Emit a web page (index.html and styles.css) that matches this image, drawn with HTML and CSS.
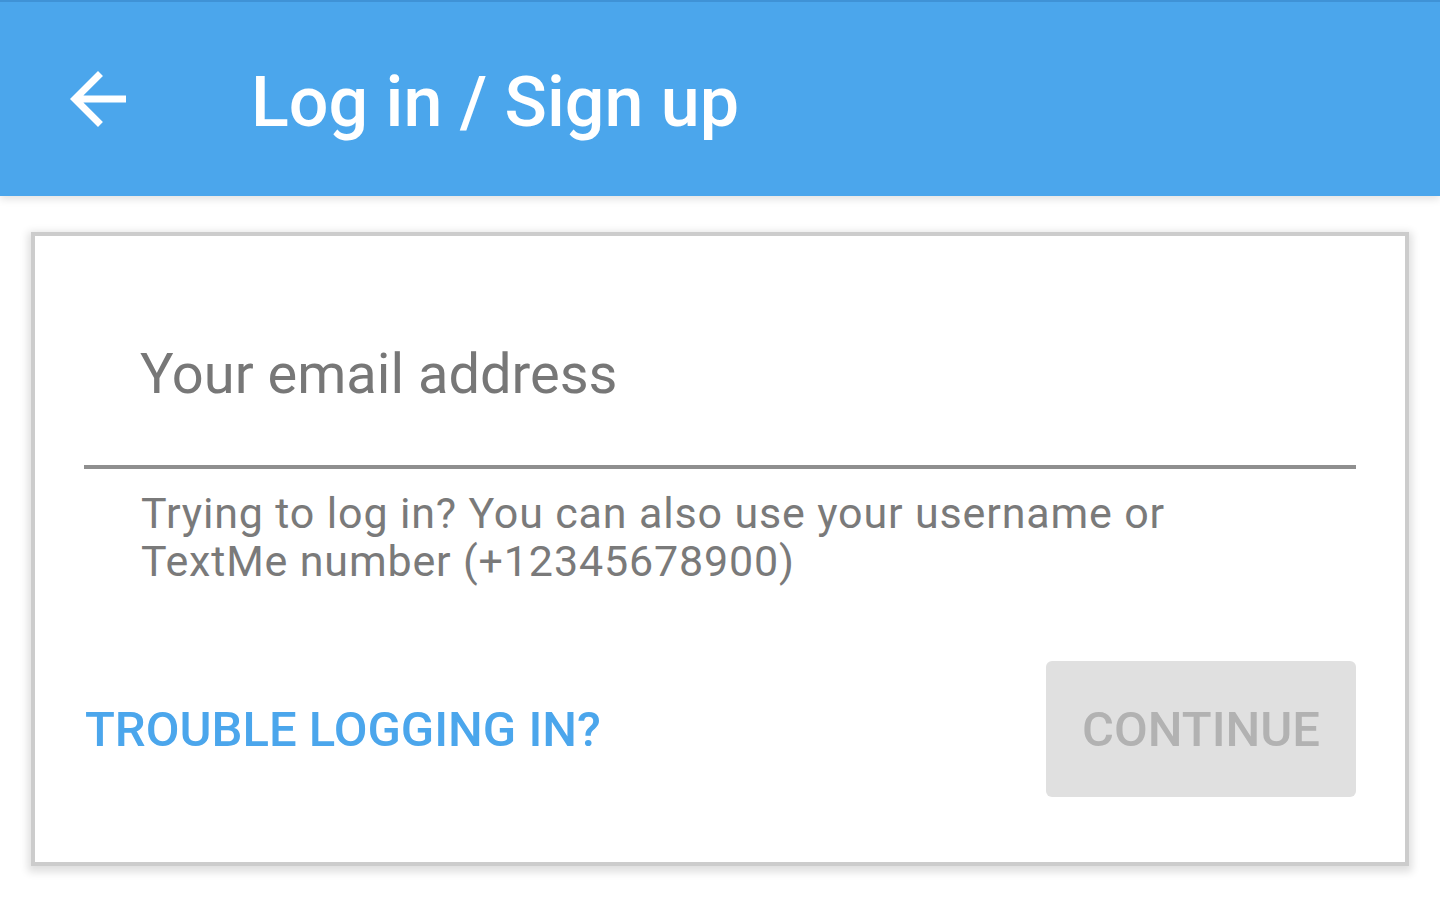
FILE: index.html
```html
<!DOCTYPE html>
<html lang="en">

<head>
    <meta charset="UTF-8">
    <meta name="viewport" content="width=device-width, initial-scale=1.0">
    <title>Log in / Sign up</title>
    <link rel="stylesheet" href="styles.css">
</head>

<body>
    <div class="topbar">
        <div class="back">
            <svg viewBox="0 0 24 24" width="84" height="84">
                <path d="M20 11H7.83l5.59-5.59L12 4l-8 8 8 8 1.41-1.41L7.83 13H20v-2z" fill="#ffffff" />
            </svg>
        </div>
        <h1 class="title">Log in / Sign up</h1>
    </div>

    <div class="main">
        <div class="card">
            <div class="field">
                <div class="placeholder">Your email address</div>
            </div>
            <p class="hint">Trying to log in? You can also use your username or<br>TextMe number (+12345678900)</p>

            <div class="actions">
                <div class="link">TROUBLE LOGGING IN?</div>
                <div class="btn">CONTINUE</div>
            </div>
        </div>
    </div>
</body>

</html>
```

FILE: styles.css
```css
* {
    padding: 0;
    margin: 0;
    box-sizing: border-box;
}

body {
    background-color: #ffffff;
    font-family: Roboto, "Noto Sans", Arial, sans-serif;
    height: 100vh;
}

.topbar {
    display: flex;
    align-items: center;
    height: 196px;
    background-color: #4ba6ec;
    border-top: 2px solid #3f92d6;
    box-shadow: 0 3px 8px rgba(0, 0, 0, 0.12);
    padding-left: 56px;
}

.back {
    display: flex;
    width: 84px;
    height: 84px;
}

.title {
    margin-left: 111px;
    color: #ffffff;
    font-size: 70px;
    font-weight: 500;
    line-height: 80px;
    margin-top: 6px;
}

.main {
    padding: 36px 31px 0 31px;
}

.card {
    background-color: #ffffff;
    border: 4px solid #cccccc;
    box-shadow: 0 3px 8px 3px rgba(0, 0, 0, 0.13);
    padding: 0 49px 65px 49px;
}

.field {
    padding: 106px 0 59px 56px;
    border-bottom: 4px solid #8f8f8f;
}

.placeholder {
    font-size: 56px;
    line-height: 64px;
    color: #777777;
}

.hint {
    margin-top: 20px;
    padding-left: 57px;
    font-size: 43px;
    line-height: 48px;
    letter-spacing: 0.85px;
    color: #7a7a7a;
}

.actions {
    display: flex;
    align-items: center;
    justify-content: space-between;
    margin-top: 76px;
}

.link {
    color: #4ba6ec;
    font-size: 49px;
    font-weight: 500;
    padding-left: 1px;
}

.btn {
    display: flex;
    align-items: center;
    justify-content: center;
    width: 310px;
    height: 136px;
    background-color: #e0e0e0;
    border-radius: 6px;
    color: #b2b2b2;
    font-size: 49px;
    font-weight: 500;
}
```
